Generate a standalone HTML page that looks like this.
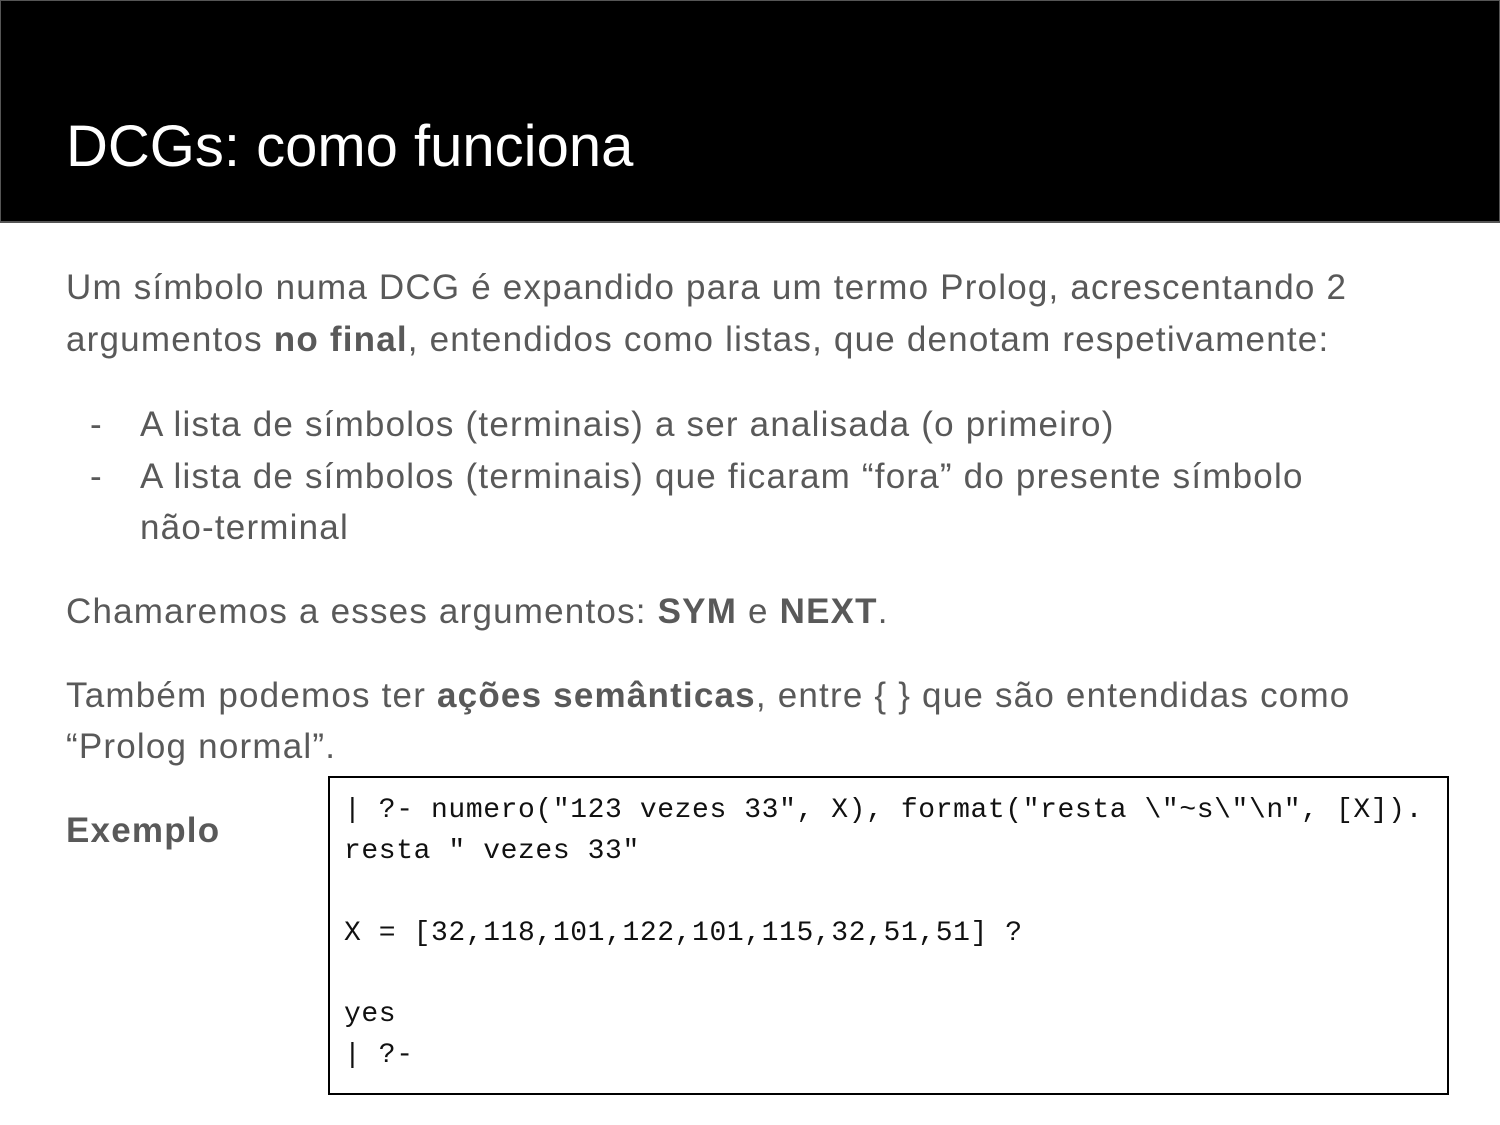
<!DOCTYPE html>
<html><head><meta charset="utf-8"><style>
body{margin:0;width:1500px;height:1125px;background:#fff;position:relative;overflow:hidden;font-family:"Liberation Sans",Arial,sans-serif}
.hdr{position:absolute;left:0;top:0;width:1498px;height:220px;background:#000;border:1px solid #555;border-bottom:2px solid #555}
.title{position:absolute;left:66px;top:112px;font-size:58px;color:#fff;line-height:70px;white-space:nowrap}
.t{position:absolute;left:66px;font-size:35px;letter-spacing:1.2px;line-height:52px;color:#595959;white-space:nowrap}
.t b{font-weight:bold}
.d{position:absolute;left:90px;font-size:35px;line-height:52px;color:#595959}
.code{position:absolute;left:328px;top:776px;width:1117px;height:315px;border:2px solid #000;}
.c{position:absolute;left:344px;font-family:"Liberation Mono",monospace;font-size:28px;letter-spacing:0.6px;line-height:41px;color:#111;white-space:pre}
</style></head><body>
<div class="hdr"></div>
<div class="title">DCGs: como funciona</div>
<div class="t" style="top:262px">Um símbolo numa DCG é expandido para um termo Prolog, acrescentando 2</div>
<div class="t" style="top:314px">argumentos <b>no final</b>, entendidos como listas, que denotam respetivamente:</div>
<div class="d" style="top:399px">-</div>
<div class="t" style="top:399px;left:140px">A lista de símbolos (terminais) a ser analisada (o primeiro)</div>
<div class="d" style="top:451px">-</div>
<div class="t" style="top:451px;left:140px">A lista de símbolos (terminais) que ficaram “fora” do presente símbolo</div>
<div class="t" style="top:502px;left:140px">não-terminal</div>
<div class="t" style="top:586px">Chamaremos a esses argumentos: <b>SYM</b> e <b>NEXT</b>.</div>
<div class="t" style="top:670px">Também podemos ter <b>ações semânticas</b>, entre { } que são entendidas como</div>
<div class="t" style="top:721px">“Prolog normal”.</div>
<div class="t" style="top:805px"><b>Exemplo</b></div>
<div class="code"></div>
<div class="c" style="top:790px">| ?- numero("123 vezes 33", X), format("resta \"~s\"\n", [X]).</div>
<div class="c" style="top:831px">resta " vezes 33"</div>
<div class="c" style="top:913px">X = [32,118,101,122,101,115,32,51,51] ?</div>
<div class="c" style="top:994px">yes</div>
<div class="c" style="top:1035px">| ?-</div>
</body></html>
